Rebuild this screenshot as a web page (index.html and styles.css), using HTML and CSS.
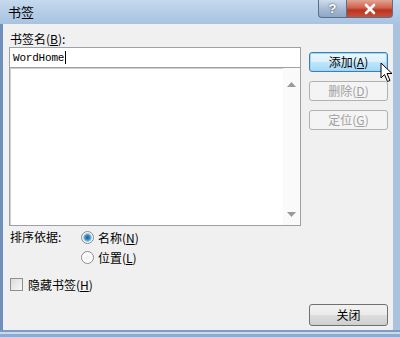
FILE: index.html
```html
<!DOCTYPE html>
<html>
<head>
<meta charset="utf-8">
<link rel="stylesheet" href="styles.css">
</head>
<body>
<div class="window">
  <div class="titlebar">
    <span class="title">书签</span>
    <div class="caption-btns">
      <div class="cbtn help">?</div>
      <div class="cbtn close">
        <svg width="14" height="12" viewBox="0 0 14 12"><path d="M3 2 L11 10 M11 2 L3 10" stroke="#fff" stroke-width="2.6" stroke-linecap="round"/></svg>
      </div>
    </div>
  </div>
  <div class="client">
    <div class="main">
      <div class="left">
        <div class="label">书签名(<u>B</u>):</div>
        <div class="namebox"><span class="mono">WordHome</span><span class="caret"></span></div>
        <div class="listbox">
          <div class="scroll">
            <svg width="9" height="5" viewBox="0 0 9 5"><path d="M0 5 L4.5 0 L9 5Z" fill="#9a9a9a"/></svg>
            <svg width="9" height="5" viewBox="0 0 9 5"><path d="M0 0 L4.5 5 L9 0Z" fill="#9a9a9a"/></svg>
          </div>
        </div>
        <div class="sort">
          <span class="sort-label">排序依据:</span>
          <div class="radios">
            <div class="radio-row"><span class="radio checked"></span><span>名称(<u>N</u>)</span></div>
            <div class="radio-row"><span class="radio"></span><span>位置(<u>L</u>)</span></div>
          </div>
        </div>
        <div class="check-row"><span class="checkbox"></span><span>隐藏书签(<u>H</u>)</span></div>
      </div>
      <div class="right">
        <div class="btn primary">添加(<u>A</u>)</div>
        <div class="btn disabled">删除(<u>D</u>)</div>
        <div class="btn disabled">定位(<u>G</u>)</div>
        <svg class="cursor" width="14" height="21" viewBox="0 0 14 21"><path d="M1 1 L1 16 L4.5 12.5 L7.5 19.5 L10 18.5 L7 11.5 L12 11.5 Z" fill="#fff" stroke="#000" stroke-width="1"/></svg>
      </div>
    </div>
    <div class="footer">
      <div class="btn close-btn">关闭</div>
    </div>
  </div>
  <div class="bottom-frame"></div>
</div>
</body>
</html>
```
FILE: styles.css
```css
* { box-sizing: border-box; }
html, body { margin: 0; padding: 0; background: #f0f0f0; }
body { font-family: "Noto Sans CJK SC", "Liberation Sans", sans-serif; font-size: 12px; color: #000; }
u { text-decoration: underline; }
.window {
  width: 400px; height: 337px;
  display: flex; flex-direction: column;
  background: linear-gradient(90deg, #6f90bb 0, #6f90bb 3px, transparent 3px, transparent 393px, #a9c2de 393px);
  position: relative; overflow: hidden;
}
.titlebar {
  height: 24px; flex: none;
  display: flex; align-items: flex-start; justify-content: space-between;
  background: linear-gradient(180deg, #c6d9ee 0%, #b4cce6 55%, #a8c3e1 100%);
  padding-left: 8px;
}
.title { font-size: 13px; line-height: 24px; color: #000; }
.caption-btns { display: flex; margin-right: 7px; height: 18px; }
.cbtn { height: 18px; display: flex; align-items: center; justify-content: center; border: 1px solid #5a6e88; border-top: none; }
.help {
  width: 28px; border-radius: 0 0 0 4px;
  background: linear-gradient(180deg, #cfdcec 0%, #a9bcd6 50%, #8ea6c6 100%);
  color: #fff; font-weight: bold; font-family: "Liberation Sans", sans-serif; font-size: 13px;
  text-shadow: 0 0 2px #233; border-right: none;
}
.close {
  width: 47px; border-radius: 0 0 4px 0;
  background: linear-gradient(180deg, #e2a393 0%, #d0634d 45%, #b9331e 60%, #c9513c 100%);
}
.client {
  flex: 1; margin: 0 7px 0 3px; background: #f0f0f0;
  display: flex; flex-direction: column;
  padding: 7px 5px 4px 6px;
}
.main { display: flex; flex: 1; }
.left { width: 292px; display: flex; flex-direction: column; }
.label { line-height: 16px; height: 16px; margin-left: 1px; }
.namebox {
  height: 20px; border: 1px solid #9aa1a9; border-bottom: none; background: #fff;
  display: flex; align-items: center; padding-left: 3px;
}
.mono { font-family: "Liberation Mono", monospace; font-size: 11px; letter-spacing: -0.2px; }
.caret { width: 1px; height: 13px; background: #000; margin-left: 1px; }
.listbox {
  height: 159px; border: 1px solid #9aa1a9; border-top: 1px solid #a0a0a0; background: #fff;
  display: flex; justify-content: flex-end;
  box-shadow: inset 1px 1px 0 #cfcfcf;
}
.scroll {
  width: 17px; display: flex; flex-direction: column; justify-content: space-between; align-items: center;
  padding: 14px 0 8px; background: #fafafa;
}
.sort { display: flex; margin-top: 2px; }
.sort-label { width: 71px; line-height: 18px; margin-left: 1px; }
.radios { display: flex; flex-direction: column; gap: 1px; }
.radio-row { display: flex; align-items: center; height: 19px; gap: 4px; }
.radio {
  width: 13px; height: 13px; border-radius: 50%; border: 1px solid #8d8d8d;
  background: radial-gradient(circle, #eee 0, #fff 70%);
  display: inline-block;
}
.radio.checked { background: radial-gradient(circle, #1f5f8f 0, #3b8ecb 2.5px, #9fcce8 4px, #f4f4f4 4.6px); }
.check-row { display: flex; align-items: center; gap: 5px; margin-top: 9px; margin-left: 1px; }
.checkbox { width: 13px; height: 13px; border: 1px solid #8f8f8f; background: linear-gradient(135deg, #dcdcdc, #f7f7f7); display: inline-block; }
.right { flex: 1; position: relative; display: flex; flex-direction: column; align-items: flex-end; padding-top: 21px; gap: 9px; }
.btn {
  width: 79px; height: 20px; border: 1px solid #707070; border-radius: 3px;
  background: linear-gradient(180deg, #f2f2f2 0%, #ebebeb 50%, #dddddd 51%, #cfcfcf 100%);
  display: flex; align-items: center; justify-content: center; line-height: 18px;
}
.btn.primary { border-color: #3c7fb1; background: linear-gradient(180deg, #eaf6fd 0%, #d9f0fc 50%, #bee6fd 51%, #a7d9f5 100%); box-shadow: inset 0 0 0 1px #9ed5f4; }
.btn.disabled { border-color: #adb2b5; background: #f4f4f4; color: #a0a0a0; }
.cursor { position: absolute; left: 79px; top: 31px; }
.footer { display: flex; justify-content: flex-end; height: 26px; align-items: flex-end; }
.close-btn { height: 22px; }
.bottom-frame { height: 7px; flex: none; background: linear-gradient(180deg, #7c9bc5 0, #7c9bc5 2px, #c9daed 2px, #c9daed 4px, #8eaad0 4px); }
```
